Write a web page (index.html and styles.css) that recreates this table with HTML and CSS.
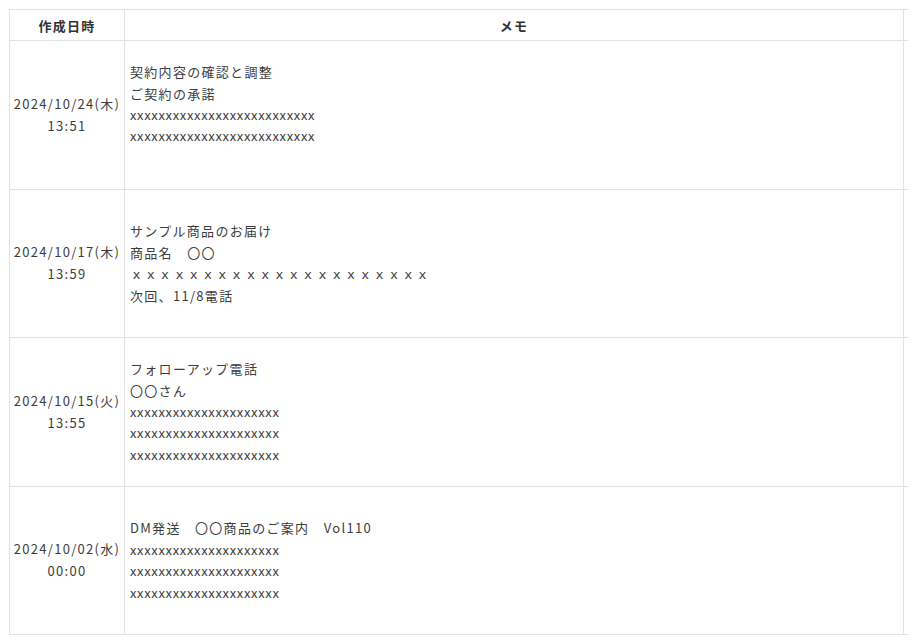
FILE: index.html
```html
<!DOCTYPE html>
<html lang="ja">
<head>
<meta charset="utf-8">
<title>メモ</title>
<link rel="stylesheet" href="styles.css">
</head>
<body>
<div class="table-wrap">
<table class="memo-table">
  <colgroup>
    <col class="col-date">
    <col class="col-memo">
    <col class="col-pad">
  </colgroup>
  <thead>
    <tr class="head-row">
      <th class="th-date">作成日時</th>
      <th class="th-memo">メモ</th>
      <th class="pad"></th>
    </tr>
  </thead>
  <tbody>
    <tr class="body-row">
      <td class="date">2024/10/24(木)<br>13:51</td>
      <td class="memo">
        <div>契約内容の確認と調整</div>
        <div>ご契約の承諾</div>
        <div class="xs">xxxxxxxxxxxxxxxxxxxxxxxxxx</div>
        <div class="xs">xxxxxxxxxxxxxxxxxxxxxxxxxx</div>
        <div>&nbsp;</div>
      </td>
      <td class="pad"></td>
    </tr>
    <tr class="body-row">
      <td class="date">2024/10/17(木)<br>13:59</td>
      <td class="memo">
        <div>サンプル商品のお届け</div>
        <div>商品名　〇〇</div>
        <div>ｘｘｘｘｘｘｘｘｘｘｘｘｘｘｘｘｘｘｘｘｘ</div>
        <div>次回、11/8電話</div>
      </td>
      <td class="pad"></td>
    </tr>
    <tr class="body-row">
      <td class="date">2024/10/15(火)<br>13:55</td>
      <td class="memo">
        <div>フォローアップ電話</div>
        <div>〇〇さん</div>
        <div class="xs">xxxxxxxxxxxxxxxxxxxxx</div>
        <div class="xs">xxxxxxxxxxxxxxxxxxxxx</div>
        <div class="xs">xxxxxxxxxxxxxxxxxxxxx</div>
      </td>
      <td class="pad"></td>
    </tr>
    <tr class="body-row">
      <td class="date">2024/10/02(水)<br>00:00</td>
      <td class="memo">
        <div>DM発送　〇〇商品のご案内　Vol110</div>
        <div class="xs">xxxxxxxxxxxxxxxxxxxxx</div>
        <div class="xs">xxxxxxxxxxxxxxxxxxxxx</div>
        <div class="xs">xxxxxxxxxxxxxxxxxxxxx</div>
      </td>
      <td class="pad"></td>
    </tr>
  </tbody>
</table>
</div>
</body>
</html>
```
FILE: styles.css
```css
html {
  background: #ffffff;
  overflow: hidden;
}
body {
  margin: 9px 0 0 9px;
  font-family: "Noto Sans CJK JP", "Noto Sans", sans-serif;
  font-size: 13px;
  color: #3d3d3d;
  letter-spacing: 0.1em;
}
.table-wrap {
  width: 898px;
}
.memo-table {
  border-collapse: collapse;
  table-layout: fixed;
  width: 898px;
}
.col-date { width: 115px; }
.col-memo { width: 779px; }
.col-pad { width: 4px; }

.memo-table th,
.memo-table td {
  border: 1px solid #e2e2e2;
  padding: 0;
}
.memo-table .pad {
  border-right: none;
}
.head-row {
  height: 31px;
}
.memo-table th {
  font-weight: bold;
  font-size: 13px;
  text-align: center;
  vertical-align: middle;
  color: #333333;
}
.body-row {
  height: 148.5px;
}
.date {
  text-align: center;
  vertical-align: middle;
  line-height: 22px;
  white-space: nowrap;
  letter-spacing: 0.1em;
}
.memo {
  text-align: left;
  vertical-align: middle;
  padding-left: 5px !important;
  line-height: 21.4px;
}
.xs {
  letter-spacing: 0.05em;
}
```
